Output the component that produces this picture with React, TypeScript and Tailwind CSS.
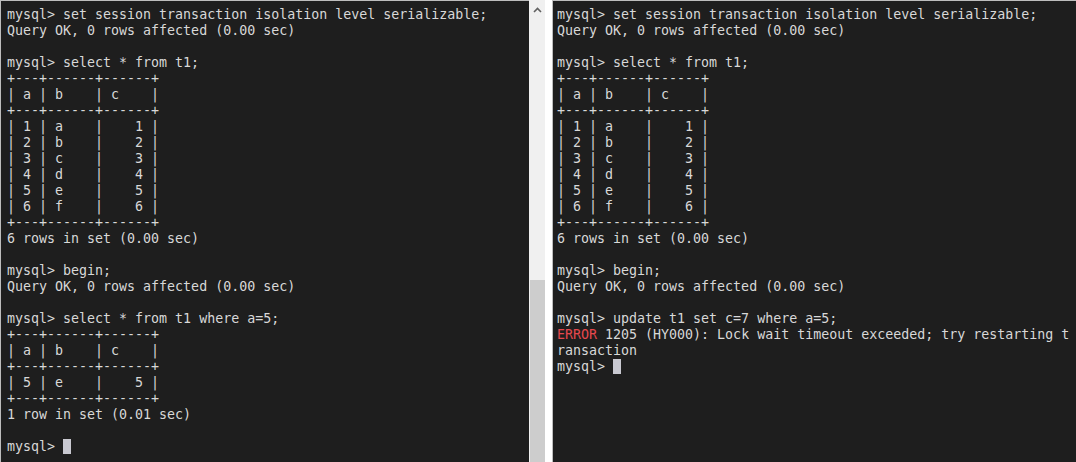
const leftLines: string[] = [
  "mysql> set session transaction isolation level serializable;",
  "Query OK, 0 rows affected (0.00 sec)",
  "",
  "mysql> select * from t1;",
  "+---+------+------+",
  "| a | b    | c    |",
  "+---+------+------+",
  "| 1 | a    |    1 |",
  "| 2 | b    |    2 |",
  "| 3 | c    |    3 |",
  "| 4 | d    |    4 |",
  "| 5 | e    |    5 |",
  "| 6 | f    |    6 |",
  "+---+------+------+",
  "6 rows in set (0.00 sec)",
  "",
  "mysql> begin;",
  "Query OK, 0 rows affected (0.00 sec)",
  "",
  "mysql> select * from t1 where a=5;",
  "+---+------+------+",
  "| a | b    | c    |",
  "+---+------+------+",
  "| 5 | e    |    5 |",
  "+---+------+------+",
  "1 row in set (0.01 sec)",
  "",
];

const rightLines: string[] = leftLines.slice(0, 19).concat([
  "mysql> update t1 set c=7 where a=5;",
]);

function Cursor() {
  return <span className="inline-block w-[8px] h-[15px] align-[-3px] bg-[#c9c9d1]" />;
}

function Line({ text }: { text: string }) {
  return <div className="h-[16px] whitespace-pre">{text}</div>;
}

export default function App() {
  return (
    <div
      className="flex w-[1076px] h-[462px] bg-white text-[13.3px] leading-[16px] text-[#d8d8d8] overflow-hidden"
      style={{ fontFamily: '"DejaVu Sans Mono", "Liberation Mono", monospace' }}
    >
      {/* left terminal */}
      <div className="w-[529px] h-full bg-[#1e1e1e] border-l border-t border-[#bdbdbd] pl-[6px] pt-[6px]">
        {leftLines.map((l, i) => (
          <Line key={i} text={l} />
        ))}
        <div className="h-[16px] whitespace-pre">
          {"mysql> "}
          <Cursor />
        </div>
      </div>

      {/* scrollbar */}
      <div className="w-[16px] h-full bg-[#f0f0f0] flex flex-col">
        <div className="h-[20px] flex items-center justify-center">
          <svg width="9" height="6" viewBox="0 0 9 6">
            <path d="M1 5 L4.5 1.5 L8 5" fill="none" stroke="#606060" strokeWidth="1.6" />
          </svg>
        </div>
        <div className="flex-1" />
        <div className="h-[182px] ml-[1px] bg-[#cdcdcd]" />
      </div>

      <div className="w-[7px] h-full bg-white" />

      {/* right terminal */}
      <div className="flex-1 h-full bg-[#1e1e1e] border-l border-t border-[#bdbdbd] pl-[4px] pt-[6px]">
        {rightLines.map((l, i) => (
          <Line key={i} text={l} />
        ))}
        <div className="h-[16px] whitespace-pre">
          <span className="text-[#e5484d]">ERROR</span>
          {" 1205 (HY000): Lock wait timeout exceeded; try restarting t"}
        </div>
        <Line text="ransaction" />
        <div className="h-[16px] whitespace-pre">
          {"mysql> "}
          <Cursor />
        </div>
      </div>
    </div>
  );
}
